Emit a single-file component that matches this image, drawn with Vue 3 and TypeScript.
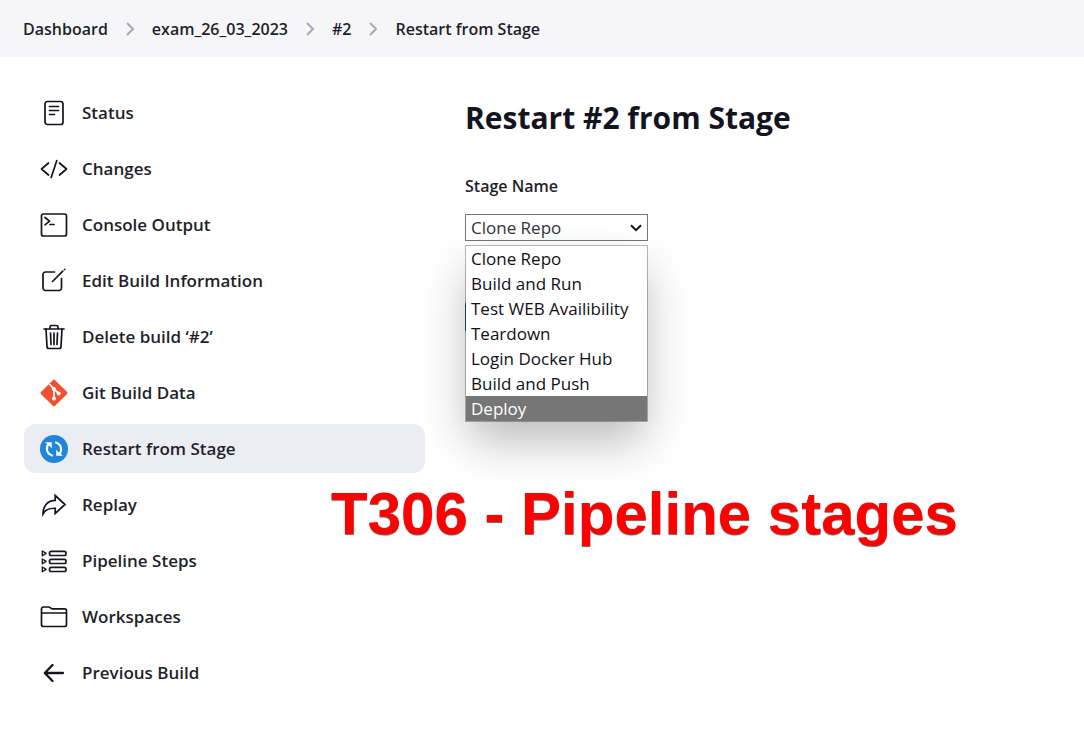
<script setup lang="ts">
import { ref } from 'vue'

interface Task {
  icon: string
  label: string
  active?: boolean
}

const crumbs: string[] = ['Dashboard', 'exam_26_03_2023', '#2', 'Restart from Stage']

const tasks: Task[] = [
  { icon: 'status', label: 'Status' },
  { icon: 'changes', label: 'Changes' },
  { icon: 'console', label: 'Console Output' },
  { icon: 'edit', label: 'Edit Build Information' },
  { icon: 'delete', label: 'Delete build ‘#2’' },
  { icon: 'git', label: 'Git Build Data' },
  { icon: 'restart', label: 'Restart from Stage', active: true },
  { icon: 'replay', label: 'Replay' },
  { icon: 'steps', label: 'Pipeline Steps' },
  { icon: 'folder', label: 'Workspaces' },
  { icon: 'back', label: 'Previous Build' },
]

const stages: string[] = [
  'Clone Repo',
  'Build and Run',
  'Test WEB Availibility',
  'Teardown',
  'Login Docker Hub',
  'Build and Push',
  'Deploy',
]

const selected = ref('Clone Repo')
const highlighted = ref('Deploy')
</script>

<template>
  <div class="page">
    <nav class="breadcrumbs" aria-label="Breadcrumb">
      <template v-for="(crumb, i) in crumbs" :key="crumb">
        <svg v-if="i > 0" class="chevron" viewBox="0 0 8 14" aria-hidden="true">
          <path d="M1 1l6 6-6 6" />
        </svg>
        <a href="#">{{ crumb }}</a>
      </template>
    </nav>

    <div class="body">
      <aside class="tasks">
        <a v-for="task in tasks" :key="task.label" href="#" class="task" :class="{ active: task.active }">
          <svg class="icon" viewBox="0 0 28 28" aria-hidden="true">
            <g v-if="task.icon === 'status'">
              <rect x="5" y="2.500" width="18" height="23" rx="2.500" />
              <path d="M9.500 7.500h9M9.500 11.500h9M9.500 15.500h5" />
            </g>
            <g v-else-if="task.icon === 'changes'">
              <path d="M8.500 8L1.500 14l7 6M19.500 8l7 6-7 6M16.800 5.500l-5.600 17" />
            </g>
            <g v-else-if="task.icon === 'console'">
              <rect x="1.500" y="3" width="25" height="22" rx="2" />
              <path d="M5 6.500l4.500 3.700L5 13.800M10 13.500h4" />
            </g>
            <g v-else-if="task.icon === 'edit'">
              <path d="M14.500 5H5.500a2.500 2.500 0 0 0-2.500 2.500v13.500a2.500 2.500 0 0 0 2.500 2.500h13.500a2.500 2.500 0 0 0 2.500-2.500v-9.500" />
              <path d="M12.500 14.500L22.800 4.200M24.500 2.500l.2-.2" />
            </g>
            <g v-else-if="task.icon === 'delete'">
              <path d="M4 6h20M10 6V4a1.500 1.500 0 0 1 1.500-1.500h5A1.500 1.500 0 0 1 18 4v2" />
              <path d="M6 6l1 17.500a2 2 0 0 0 2 2h10a2 2 0 0 0 2-2L22 6M10.500 10l.5 11.500M14 10v11.500M17.500 10L17 21.500" />
            </g>
            <g v-else-if="task.icon === 'git'">
              <rect class="git" x="4.100" y="4.100" width="19.800" height="19.800" rx="1.600" transform="rotate(45 14 14)" />
              <path class="white" d="M9.800 5.500l4.200 4.300v10M14 9.800l5 5" />
              <circle class="dot" cx="14" cy="10" r="2" />
              <circle class="dot" cx="14" cy="19.500" r="2" />
              <circle class="dot" cx="18.700" cy="14.500" r="2" />
            </g>
            <g v-else-if="task.icon === 'restart'">
              <circle class="disc" cx="14" cy="14" r="14" />
              <path class="arc" d="M8.800 8.500C5.500 12.500 6.300 19 12.800 20.700M19.200 19.500C22.500 15.500 21.700 9 15.200 7.300" />
              <path class="dot" d="M5 7.200h6.800v6l-2.200-2.200zM23 20.800h-6.800v-6l2.200 2.200z" />
            </g>
            <g v-else-if="task.icon === 'replay'" class="sharp">
              <path d="M15.200 4.500l9.800 9-9.800 9v-5.200C9.500 17 5.500 18.500 3 23c0-7.500 4-13.300 12.200-13.600z" />
            </g>
            <g v-else-if="task.icon === 'steps'">
              <path class="thin" d="M2.300 4v4.800l3.800-2.400zM2.300 12v4.800l3.800-2.400zM2.300 20v4.800l3.800-2.400z" />
              <rect x="9.500" y="4.300" width="16.500" height="4.200" rx="1.800" />
              <rect x="9.500" y="12.300" width="16.500" height="4.200" rx="1.800" />
              <rect x="9.500" y="20.300" width="16.500" height="4.200" rx="1.800" />
            </g>
            <g v-else-if="task.icon === 'folder'">
              <path d="M1.500 10V6A2 2 0 0 1 3.500 4h5.200c1.600 0 1.800 1.800 3.500 1.800h12.300a2 2 0 0 1 2 2V21.500a2 2 0 0 1-2 2h-21a2 2 0 0 1-2-2V10h25" />
            </g>
            <g v-else class="bold">
              <path d="M12.500 6L4.800 14l7.700 8M5 14h18" />
            </g>
          </svg>
          <span>{{ task.label }}</span>
        </a>
      </aside>

      <main class="content">
        <h1>Restart #2 from Stage</h1>
        <label for="stage">Stage Name</label>
        <div class="field">
          <select id="stage" v-model="selected">
            <option v-for="stage in stages" :key="stage">{{ stage }}</option>
          </select>
          <svg class="caret" viewBox="0 0 12 8" aria-hidden="true">
            <path d="M1 1.200l5 5 5-5" />
          </svg>
          <ul class="menu" role="listbox" aria-label="Stage Name">
            <li
              v-for="stage in stages"
              :key="stage"
              role="option"
              :aria-selected="stage === highlighted"
              :class="{ highlighted: stage === highlighted }"
              @mouseenter="highlighted = stage"
              @click="selected = stage"
            >
              {{ stage }}
            </li>
          </ul>
        </div>
        <button type="submit" class="submit" aria-label="Restart"></button>
      </main>
    </div>

    <p class="caption">T306 - Pipeline stages</p>
  </div>
</template>

<style>
body {
  margin: 0;
  background: #fff;
}
</style>

<style scoped>
.page {
  position: relative;
  min-height: 100vh;
  color: #1f1f2b;
  font-family: "Segoe UI", "Open Sans", "Noto Sans", sans-serif;
  font-size: 17px;
  font-weight: 600;
}

a {
  color: inherit;
  text-decoration: none;
}

.breadcrumbs {
  display: flex;
  align-items: center;
  gap: 18px;
  height: 57px;
  padding: 0 23px;
  background: #f6f6f9;
  font-size: 16px;
}

.chevron {
  width: 8px;
  height: 14px;
  fill: none;
  stroke: #a9a9b8;
  stroke-width: 2;
}

.body {
  display: grid;
  grid-template-columns: 401px 1fr;
  gap: 40px;
  padding: 31px 24px;
}

.tasks {
  display: flex;
  flex-direction: column;
  gap: 7px;
}

.task {
  display: flex;
  align-items: center;
  gap: 14px;
  height: 49px;
  padding: 0 16px;
  border-radius: 12px;
}

.task.active {
  background: #ecedf3;
}

.icon {
  flex: none;
  width: 28px;
  height: 28px;
  fill: none;
  stroke: #14141f;
  stroke-width: 1.7;
  stroke-linecap: round;
  stroke-linejoin: round;
}

.icon .bold {
  stroke-width: 2.3;
}

.icon .thin {
  stroke-width: 1.3;
}

.icon .sharp {
  stroke-linejoin: miter;
}

.icon .git {
  fill: #f05030;
  stroke: none;
}

.icon .disc {
  fill: #2186d8;
  stroke: none;
}

.icon .white {
  stroke: #fff;
}

.icon .arc {
  stroke: #fff;
  stroke-width: 2;
  stroke-linecap: butt;
}

.icon .dot {
  fill: #fff;
  stroke: none;
}

.content {
  display: flex;
  flex-direction: column;
  align-items: flex-start;
  padding-top: 8px;
}

h1 {
  margin: 0;
  color: #14141f;
  font-size: 30px;
  font-weight: 700;
  line-height: 44px;
}

label {
  margin-top: 34px;
  font-size: 16px;
  line-height: 24px;
}

.field {
  position: relative;
  width: 183px;
  margin-top: 16px;
}

select {
  display: block;
  width: 100%;
  height: 27px;
  padding: 0 5px;
  border: 1px solid #767676;
  border-radius: 0;
  appearance: none;
  background: #fff;
  color: #333340;
  font: inherit;
  font-weight: 400;
}

.caret {
  position: absolute;
  top: 10px;
  right: 6px;
  width: 12px;
  height: 8px;
  fill: none;
  stroke: #14141f;
  stroke-width: 2;
  pointer-events: none;
}

.menu {
  position: absolute;
  z-index: 1;
  top: 31px;
  left: 0;
  right: 0;
  margin: 0;
  padding: 0;
  border: 1px solid rgba(0, 0, 0, 0.28);
  background: #fff;
  background-clip: padding-box;
  box-shadow: 0 22px 44px -4px rgba(0, 0, 0, 0.28);
  list-style: none;
  color: #101018;
  font-weight: 400;
  line-height: 25px;
  white-space: nowrap;
}

.menu li {
  padding: 0 5px;
}

.menu .highlighted {
  background: #767676;
  color: #fff;
}

.submit {
  width: 64px;
  height: 36px;
  margin-top: 58px;
  border: 0;
  border-radius: 6px;
  background: #1f62ad;
}

.caption {
  position: absolute;
  z-index: 2;
  top: 481px;
  left: 331px;
  margin: 0;
  color: #f00;
  font-family: "Liberation Sans", Arial, sans-serif;
  font-size: 60px;
  font-weight: 700;
  line-height: 66px;
  text-shadow: 0 1px 1px rgba(60, 60, 60, 0.8);
  white-space: nowrap;
}
</style>
